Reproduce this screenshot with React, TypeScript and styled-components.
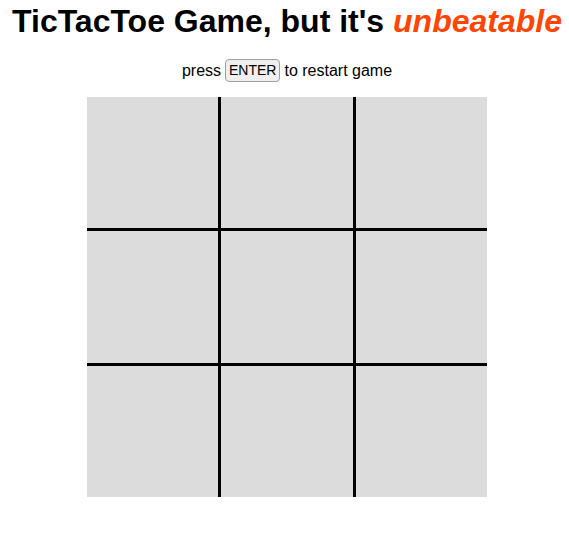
import React from "react";
import styled, { createGlobalStyle } from "styled-components";

const Global = createGlobalStyle`
  html, body { margin: 0; padding: 0; background: #fff; }
  body { font-family: "Liberation Sans", Arial, sans-serif; color: #000; }
`;

const Page = styled.main`
  display: flex;
  flex-direction: column;
  align-items: center;
  padding-left: 5px;
  padding-top: 3px;
`;

const Title = styled.h1`
  margin: 0;
  font-size: 32px;
  font-weight: bold;
  line-height: 37px;
  white-space: nowrap;
`;

const Accent = styled.em`
  color: #ff4500;
  font-style: italic;
`;

const Hint = styled.p`
  margin: 19px 0 0;
  font-size: 16px;
  line-height: 23px;
  display: flex;
  align-items: center;
  gap: 4px;
`;

const Key = styled.kbd`
  font-family: "Liberation Sans", Arial, sans-serif;
  font-size: 14px;
  padding: 3px 3px;
  border: 1px solid #a0a0a0;
  border-radius: 4px;
  background: #efefef;
  line-height: 15px;
`;

const Board = styled.div`
  margin-top: 15px;
  width: 400px;
  height: 400px;
  display: grid;
  grid-template-columns: repeat(3, 1fr);
  grid-template-rows: repeat(3, 1fr);
  gap: 3px;
  background: #000;
`;

const Cell = styled.div`
  background: #dcdcdc;
`;

export default function App() {
  return (
    <>
      <Global />
      <Page>
        <Title>
          TicTacToe Game, but it's <Accent>unbeatable</Accent>
        </Title>
        <Hint>
          press <Key>ENTER</Key> to restart game
        </Hint>
        <Board>
          {Array.from({ length: 9 }).map((_, i) => (
            <Cell key={i} />
          ))}
        </Board>
      </Page>
    </>
  );
}
